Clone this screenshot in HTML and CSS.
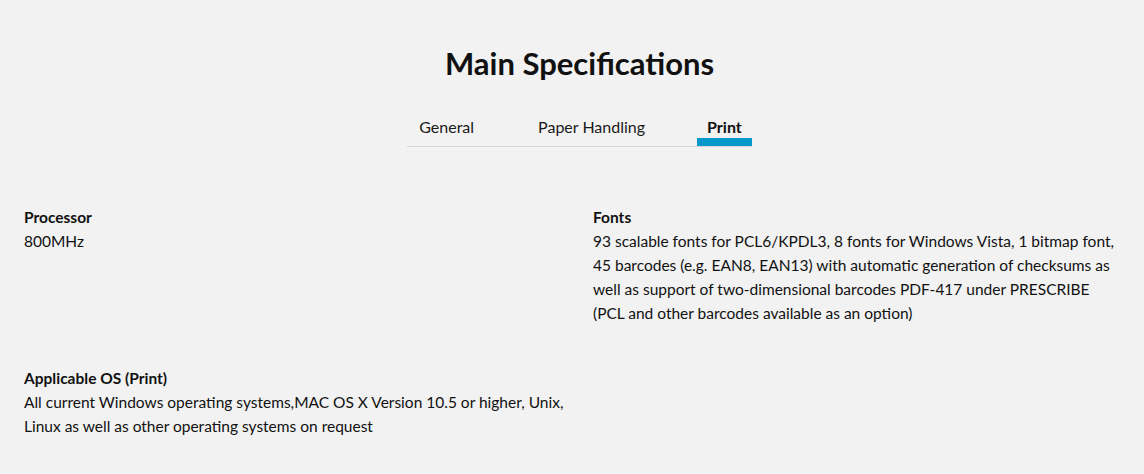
FILE: index.html
```html
<!DOCTYPE html>
<html lang="en">
<head>
<meta charset="utf-8">
<title>Main Specifications</title>
<link rel="stylesheet" href="styles.css">
</head>
<body>
<section class="specs-section">
  <header class="specs-head">
    <h2 class="title">Main Specifications</h2>
    <div class="tabs-wrap">
      <ul class="tabs">
        <li class="tab">General</li>
        <li class="tab">Paper Handling</li>
        <li class="tab tab-active">Print</li>
      </ul>
    </div>
  </header>
  <div class="specs">
    <div class="spec">
      <div class="spec-label">Processor</div>
      <div class="spec-value">800MHz</div>
    </div>
    <div class="spec">
      <div class="spec-label">Fonts</div>
      <div class="spec-value">93 scalable fonts for PCL6/KPDL3, 8 fonts for Windows Vista, 1 bitmap font, 45 barcodes (e.g. EAN8, EAN13) with automatic generation of checksums as well as support of two-dimensional barcodes PDF-417 under PRESCRIBE (PCL and other barcodes available as an option)</div>
    </div>
    <div class="spec">
      <div class="spec-label">Applicable OS (Print)</div>
      <div class="spec-value">All current Windows operating systems,MAC OS X Version 10.5 or higher, Unix, Linux as well as other operating systems on request</div>
    </div>
  </div>
</section>
</body>
</html>
```

FILE: styles.css
```css
* { box-sizing: border-box; }

html, body {
  margin: 0;
  padding: 0;
  background: #f2f2f2;
  color: #111;
  font-family: Lato, "Liberation Sans", sans-serif;
}

.specs-section {
  padding: 43px 24px 0;
}

.specs-head {
  padding-left: 15px;
}

.title {
  margin: 0;
  text-align: center;
  font-size: 31px;
  line-height: 40px;
  font-weight: 700;
}

.tabs-wrap {
  display: flex;
  justify-content: center;
  margin-top: 32px;
}

.tabs {
  display: flex;
  gap: 40px;
  list-style: none;
  margin: 0;
  padding: 0;
  border-bottom: 1px solid #d6d6d6;
}

.tab {
  padding: 0 12px;
  font-size: 16px;
  line-height: 23px;
  color: #1a1a1a;
  border-bottom: 8px solid transparent;
}

.tab-active {
  font-weight: 700;
  color: #111;
  padding: 0 10px;
  border-bottom-color: #0899cc;
}

.specs {
  display: grid;
  grid-template-columns: 545px 530px;
  column-gap: 24px;
  row-gap: 41px;
  margin-top: 58px;
}

.spec-label {
  font-size: 15.5px;
  line-height: 24px;
  font-weight: 700;
}

.spec-value {
  font-size: 15.5px;
  line-height: 24px;
}
```
